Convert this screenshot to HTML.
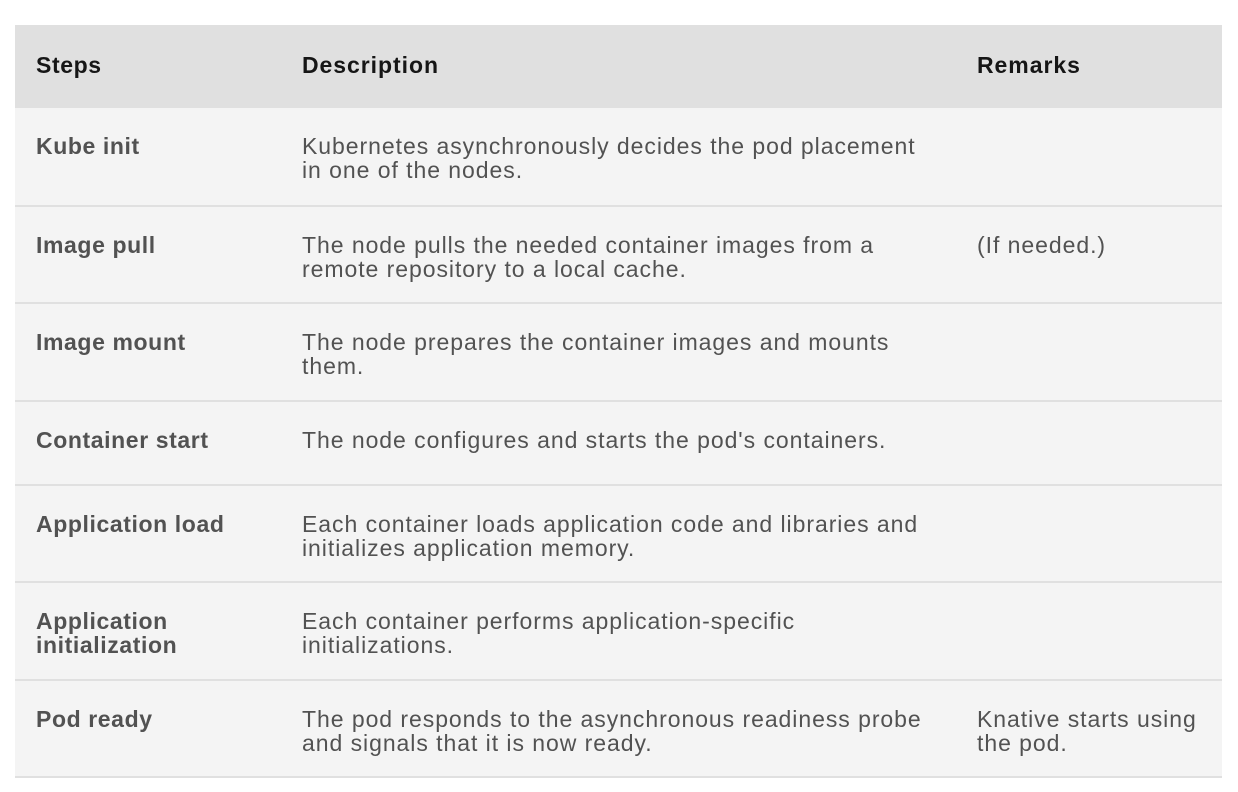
<!DOCTYPE html>
<html><head><meta charset="utf-8"><style>
body{margin:0;background:#fff;width:1238px;height:792px;overflow:hidden;font-family:"Liberation Sans",sans-serif;}
.t{position:absolute;left:15px;top:25px;width:1207px;}
.r{position:relative;background:#f4f4f4;border-bottom:2px solid #e0e0e0;box-sizing:border-box;color:#525252;font-size:23px;line-height:24px;letter-spacing:0.95px;}
.r div{position:absolute;top:26px;white-space:nowrap;}
.h{background:#e0e0e0;color:#161616;font-weight:bold;border:none}
.h div{top:28px}
.a{left:21px;font-weight:bold;letter-spacing:0.6px}
.b{left:287px}
.c{left:962px}
</style></head><body>
<div class="t">
<div class="r h" style="height:83px"><div class="a">Steps</div><div class="b">Description</div><div class="c">Remarks</div></div>
<div class="r" style="height:99px"><div class="a">Kube init</div><div class="b">Kubernetes asynchronously decides the pod placement<br>in one of the nodes.</div></div>
<div class="r" style="height:97px"><div class="a">Image pull</div><div class="b">The node pulls the needed container images from a<br>remote repository to a local cache.</div><div class="c">(If needed.)</div></div>
<div class="r" style="height:98px"><div class="a">Image mount</div><div class="b">The node prepares the container images and mounts<br>them.</div></div>
<div class="r" style="height:84px"><div class="a">Container start</div><div class="b">The node configures and starts the pod's containers.</div></div>
<div class="r" style="height:97px"><div class="a">Application load</div><div class="b">Each container loads application code and libraries and<br>initializes application memory.</div></div>
<div class="r" style="height:98px"><div class="a">Application<br>initialization</div><div class="b">Each container performs application-specific<br>initializations.</div></div>
<div class="r" style="height:97px"><div class="a">Pod ready</div><div class="b">The pod responds to the asynchronous readiness probe<br>and signals that it is now ready.</div><div class="c">Knative starts using<br>the pod.</div></div>
</div>
</body></html>
